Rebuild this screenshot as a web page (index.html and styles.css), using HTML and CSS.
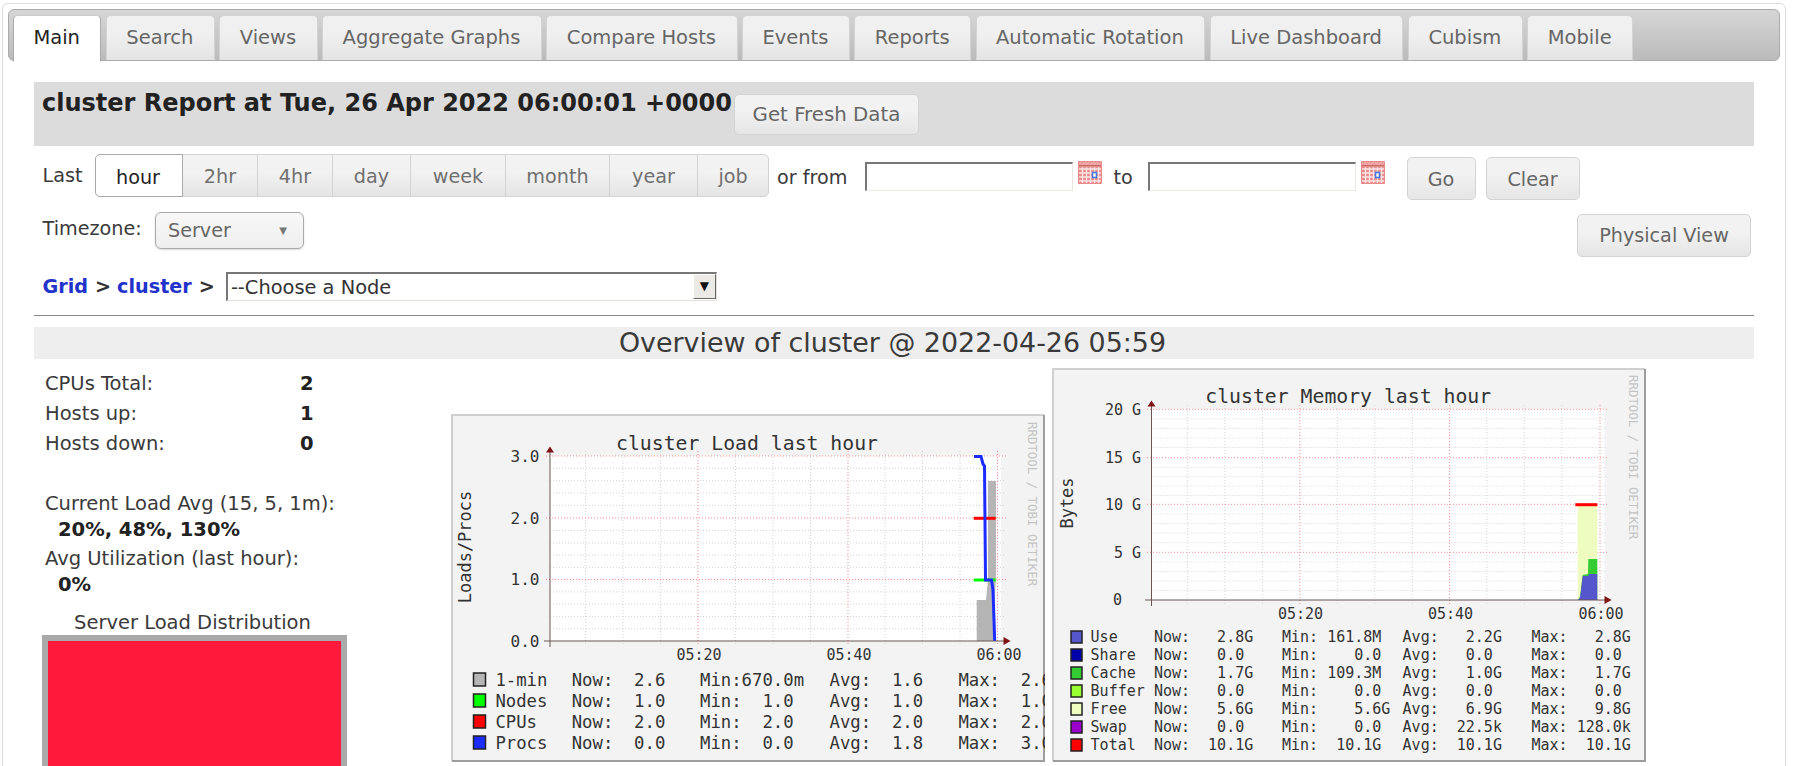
FILE: index.html
```html
<!DOCTYPE html>
<html lang="en">
<head>
<meta charset="utf-8">
<title>cluster Report</title>
<link rel="stylesheet" href="styles.css">
</head>
<body>
<svg class="defs" width="0" height="0" aria-hidden="true">
  <symbol id="cal" viewBox="0 0 24 23">
    <rect x="0" y="0" width="24" height="23" rx="1" fill="#e88a8a"/>
    <rect x="1" y="1" width="22" height="3" fill="#efa3a3"/>
    <path d="M1 4.500H23" stroke="#c86a6a" stroke-width="1" fill="none"/>
    <path d="M1 8h22M1 12h22M1 16h22M1 20h22M4.500 6v16M8.500 6v16M12.500 6v16M16.500 6v16M20.500 6v16" stroke="#fbe6e6" stroke-width="1.300" fill="none"/>
    <rect x="14.500" y="11.500" width="4" height="5" fill="#fff" stroke="#4a78e0" stroke-width="1.600"/>
  </symbol>
</svg>
<div class="panel">
  <nav class="tabbar">
    <a class="tab tab-on">Main</a>
    <a class="tab">Search</a>
    <a class="tab">Views</a>
    <a class="tab">Aggregate Graphs</a>
    <a class="tab">Compare Hosts</a>
    <a class="tab">Events</a>
    <a class="tab">Reports</a>
    <a class="tab">Automatic Rotation</a>
    <a class="tab">Live Dashboard</a>
    <a class="tab">Cubism</a>
    <a class="tab">Mobile</a>
  </nav>
  <div class="content">
    <header class="report">
      <h1 class="report-title">cluster Report at Tue, 26 Apr 2022 06:00:01 +0000</h1>
      <button class="btn btn-fresh">Get Fresh Data</button>
    </header>

    <div class="range-row">
      <span class="last">Last</span>
      <div class="btnset">
        <span class="seg seg-on seg-hour">hour</span>
        <span class="seg seg-2hr">2hr</span>
        <span class="seg seg-4hr">4hr</span>
        <span class="seg seg-day">day</span>
        <span class="seg seg-week">week</span>
        <span class="seg seg-month">month</span>
        <span class="seg seg-year">year</span>
        <span class="seg seg-job">job</span>
      </div>
      <span class="orfrom">or from</span>
      <input class="date" type="text" aria-label="from">
      <svg class="cal" width="24" height="23"><use href="#cal"/></svg>
      <span class="to">to</span>
      <input class="date" type="text" aria-label="to">
      <svg class="cal" width="24" height="23"><use href="#cal"/></svg>
      <button class="btn btn-go">Go</button>
      <button class="btn btn-clear">Clear</button>
    </div>

    <div class="tz-row">
      <span class="tz-label">Timezone:</span>
      <div class="tz-select"><span>Server</span><i class="tz-caret">▼</i></div>
      <button class="btn btn-phys">Physical View</button>
    </div>

    <div class="crumb-row">
      <a class="crumb">Grid</a><b class="sep">&gt;</b><a class="crumb">cluster</a><b class="sep">&gt;</b>
      <div class="node-select"><span>--Choose a Node</span><i class="node-arrow">▼</i></div>
    </div>

    <hr class="rule">
    <h2 class="overview">Overview of cluster @ 2022-04-26 05:59</h2>

    <main class="main">
      <aside class="side">
        <dl class="stats">
          <dt>CPUs Total:</dt><dd>2</dd>
          <dt>Hosts up:</dt><dd>1</dd>
          <dt>Hosts down:</dt><dd>0</dd>
        </dl>
        <p class="metric">Current Load Avg (15, 5, 1m):<b>20%, 48%, 130%</b></p>
        <p class="metric">Avg Utilization (last hour):<b>0%</b></p>
        <p class="pie-title">Server Load Distribution</p>
        <div class="pie"></div>
      </aside>

      <svg class="graph" width="594" height="348" viewBox="0 0 594 348">
        <rect class="bg" width="594" height="348"/>
        <rect class="plot" x="99" y="42" width="451" height="185"/>
        <path class="grid" d="M134.500 37V231M172 37V231M209.600 37V231M284.500 37V231M322 37V231M359.500 37V231M434 37V231M471.500 37V231M509 37V231M99 54.300H555M99 66.600H555M99 79H555M99 91.300H555M99 116.600H555M99 129H555M99 141H555M99 153.300H555M99 177.800H555M99 190H555M99 202.500H555M99 214.800H555"/>
        <path class="grid-major" d="M247 37V231M397 37V231M546.500 37V231M95 42H555M95 104H555M95 165.500H555"/>
        <path fill="#b5b5b5" d="M525.700 227V186H535L537 166V67H545V166L543 190L543.700 227Z"/>
        <path class="s-red" d="M522.700 104.300H544.700"/>
        <path class="s-green" d="M522.700 166H544.700"/>
        <path class="s-blue" d="M523 42.500H530L532 50L533.500 52L534.500 166H540.500L542 176L543.700 227"/>
        <path class="axis" d="M99 38V233M93 227H555"/>
        <path class="arrow" d="M95 38.500L99 32.500L103 38.500ZM552.500 223L559.600 227L552.500 231Z"/>
        <text class="t-title" x="165" y="29">cluster Load last hour</text>
        <text class="t-ylab" transform="translate(14 133) rotate(-90)">Loads/Procs</text>
        <text class="t-wm" transform="translate(581 8) rotate(90)">RRDTOOL / TOBI OETIKER</text>
        <g class="t-tick-lg t-end">
          <text x="88.500" y="42">3.0</text><text x="88.500" y="104">2.0</text><text x="88.500" y="165.500">1.0</text><text x="88.500" y="227">0.0</text>
        </g>
        <g class="t-tick t-mid">
          <text x="248" y="240.500">05:20</text><text x="398" y="240.500">05:40</text><text x="548" y="240.500">06:00</text>
        </g>
        <g class="swatch">
          <rect x="22.500" y="259" width="12" height="13" fill="#b5b5b5"/>
          <rect x="22.500" y="280" width="12" height="13" fill="#00ff00"/>
          <rect x="22.500" y="301" width="12" height="13" fill="#ff0000"/>
          <rect x="22.500" y="322" width="12" height="13" fill="#1c2cff"/>
        </g>
        <path class="edge-light" d="M1 347V1H593"/>
        <path class="edge-dark" d="M593 1V347H1"/>
        <g class="t-leg-a">
          <text y="265.500"><tspan x="44.400">1-min</tspan><tspan x="120.700">Now:  2.6</tspan><tspan x="249">Min:670.0m</tspan><tspan x="378.500">Avg:  1.6</tspan><tspan x="507.400">Max:  2.6</tspan></text>
          <text y="286.500"><tspan x="44.400">Nodes</tspan><tspan x="120.700">Now:  1.0</tspan><tspan x="249">Min:  1.0</tspan><tspan x="378.500">Avg:  1.0</tspan><tspan x="507.400">Max:  1.0</tspan></text>
          <text y="307.500"><tspan x="44.400">CPUs</tspan><tspan x="120.700">Now:  2.0</tspan><tspan x="249">Min:  2.0</tspan><tspan x="378.500">Avg:  2.0</tspan><tspan x="507.400">Max:  2.0</tspan></text>
          <text y="328.500"><tspan x="44.400">Procs</tspan><tspan x="120.700">Now:  0.0</tspan><tspan x="249">Min:  0.0</tspan><tspan x="378.500">Avg:  1.8</tspan><tspan x="507.400">Max:  3.0</tspan></text>
        </g>
      </svg>

      <svg class="graph" width="594" height="394" viewBox="0 0 594 394">
        <rect class="bg" width="594" height="394"/>
        <rect class="plot" x="99.500" y="41.300" width="453" height="190.700"/>
        <path class="grid" d="M135.300 37V236M172.800 37V236M210.400 37V236M285.300 37V236M322.800 37V236M360.300 37V236M434.800 37V236M472.300 37V236M509.800 37V236M99.500 50.900H555M99.500 60.400H555M99.500 70H555M99.500 79.500H555M99.500 99.300H555M99.500 108.700H555M99.500 118H555M99.500 127.500H555M99.500 146H555M99.500 155.600H555M99.500 165H555M99.500 174.700H555M99.500 194H555M99.500 203.500H555M99.500 213H555M99.500 222.500H555"/>
        <path class="grid-major" d="M247.800 37V236M397.600 37V236M548 37V236M95 41.300H555M95 89.700H555M95 136.300H555M95 184.300H555"/>
        <rect x="525.700" y="136.700" width="19.600" height="95.300" fill="#eefcc0"/>
        <path fill="#33cc33" d="M525.700 232L528 229L530.700 207L536 206L536.300 191H545.300V232Z"/>
        <path fill="#5555cc" d="M525.700 232L528 230L530.700 208H536.300L537 206H545.300V232Z"/>
        <path class="s-red" d="M523.300 136.700H545.300"/>
        <path class="axis" d="M99.500 38V238M93 232H555"/>
        <path class="arrow" d="M95.500 38.500L99.500 32.500L103.500 38.500ZM552.500 228L559.600 232L552.500 236Z"/>
        <text class="t-title" x="153.300" y="28">cluster Memory last hour</text>
        <text class="t-ylab" transform="translate(15 135) rotate(-90)">Bytes</text>
        <text class="t-wm" transform="translate(581 7) rotate(90)">RRDTOOL / TOBI OETIKER</text>
        <g class="t-tick t-end">
          <text x="89" y="42">20 G</text><text x="89" y="90">15 G</text><text x="89" y="137">10 G</text><text x="89" y="184.500">5 G</text><text x="70" y="232">0</text>
        </g>
        <g class="t-tick t-mid">
          <text x="248.500" y="246">05:20</text><text x="398.500" y="246">05:40</text><text x="549" y="246">06:00</text>
        </g>
        <g class="swatch">
          <rect x="19" y="263" width="11" height="12" fill="#5555cc"/>
          <rect x="19" y="281" width="11" height="12" fill="#0000aa"/>
          <rect x="19" y="299" width="11" height="12" fill="#33cc33"/>
          <rect x="19" y="317" width="11" height="12" fill="#99ff33"/>
          <rect x="19" y="335" width="11" height="12" fill="#f0ffc0"/>
          <rect x="19" y="353" width="11" height="12" fill="#9900cc"/>
          <rect x="19" y="371" width="11" height="12" fill="#ff0000"/>
        </g>
        <g class="t-leg-b">
          <text y="268.700"><tspan x="38.600">Use</tspan><tspan x="101.900">Now:   2.8G</tspan><tspan x="230">Min: 161.8M</tspan><tspan x="350.600">Avg:   2.2G</tspan><tspan x="479.500">Max:   2.8G</tspan></text>
          <text y="286.700"><tspan x="38.600">Share</tspan><tspan x="101.900">Now:   0.0</tspan><tspan x="230">Min:    0.0</tspan><tspan x="350.600">Avg:   0.0</tspan><tspan x="479.500">Max:   0.0</tspan></text>
          <text y="304.700"><tspan x="38.600">Cache</tspan><tspan x="101.900">Now:   1.7G</tspan><tspan x="230">Min: 109.3M</tspan><tspan x="350.600">Avg:   1.0G</tspan><tspan x="479.500">Max:   1.7G</tspan></text>
          <text y="322.700"><tspan x="38.600">Buffer</tspan><tspan x="101.900">Now:   0.0</tspan><tspan x="230">Min:    0.0</tspan><tspan x="350.600">Avg:   0.0</tspan><tspan x="479.500">Max:   0.0</tspan></text>
          <text y="340.700"><tspan x="38.600">Free</tspan><tspan x="101.900">Now:   5.6G</tspan><tspan x="230">Min:    5.6G</tspan><tspan x="350.600">Avg:   6.9G</tspan><tspan x="479.500">Max:   9.8G</tspan></text>
          <text y="358.700"><tspan x="38.600">Swap</tspan><tspan x="101.900">Now:   0.0</tspan><tspan x="230">Min:    0.0</tspan><tspan x="350.600">Avg:  22.5k</tspan><tspan x="479.500">Max: 128.0k</tspan></text>
          <text y="376.700"><tspan x="38.600">Total</tspan><tspan x="101.900">Now:  10.1G</tspan><tspan x="230">Min:  10.1G</tspan><tspan x="350.600">Avg:  10.1G</tspan><tspan x="479.500">Max:  10.1G</tspan></text>
        </g>
        <path class="edge-light" d="M1 393V1H593"/>
        <path class="edge-dark" d="M593 1V393H1"/>
      </svg>
    </main>
  </div>
</div>
</body>
</html>
```
FILE: styles.css
```css
* { box-sizing: border-box; }
html, body { margin: 0; height: 766px; overflow: hidden; background: #fff; }
body { font: 19.2px "DejaVu Sans", sans-serif; color: #3a3a3a; padding: 3px 10px 0 2px; }
.defs { display: block; height: 0; }

.panel { border: 1px solid #ddd; border-radius: 6px; height: 900px; }

.tabbar {
  display: flex; gap: 4.500px; height: 52px; margin: 5px 5px 0;
  padding: 5px 0 0 4px;
  border: 1px solid #aaa; border-radius: 6px;
  background: linear-gradient(#d6d6d6, #bbb);
}
.tab {
  display: block; height: 46px; padding: 0 20.500px 0 19.400px; line-height: 43px; font-size: 19.500px;
  color: #666; white-space: nowrap;
  border: 1px solid #d3d3d3; border-bottom-color: #aaa; border-radius: 5px 5px 0 0;
  background: linear-gradient(#f0f0f0 40%, #e4e4e4);
}
.tab-on { background: #fff; color: #222; border-color: #ccc #aaa #fff; height: 47px; }

.content { padding: 0 31px; }

.report { display: flex; height: 64px; margin-top: 21px; background: #dcdcdc; padding-left: 8px; }
.report-title { margin: 5px 0 0; font-size: 24px; line-height: 32px; font-weight: bold; color: #222; white-space: nowrap; }

.btn {
  font: inherit; color: #666; height: 43px; padding: 0;
  border: 1px solid #d3d3d3; border-radius: 5px;
  background: linear-gradient(#f2f2f2 40%, #e5e5e5);
}
.btn-fresh { width: 185px; height: 41px; margin: 12px 0 0 2px; font-size: 19.800px; }

.range-row { display: flex; align-items: flex-start; height: 58px; padding: 8px 0 0 8.500px; }
.last { width: 52.500px; line-height: 43px; }
.btnset {
  display: flex; width: 674px; height: 43px; margin-right: 8px;
  border: 1px solid #d3d3d3; border-radius: 5px;
  background: linear-gradient(#f2f2f2 40%, #e5e5e5);
}
.seg { padding-top: 2px; line-height: 40px; text-align: center; color: #707070; border-right: 1px solid #d3d3d3; }
.seg-on { color: #222; background: #fff; border: 1px solid #aaa; border-radius: 5px 0 0 5px; margin: -1px 0 -1px -1px; line-height: 41px; }
.seg-hour { width: 88px; padding-right: 2px; } .seg-2hr { width: 75px; } .seg-4hr { width: 75px; } .seg-day { width: 78px; }
.seg-week { width: 95px; } .seg-month { width: 104px; } .seg-year { width: 88px; } .seg-job { flex: 1; border-right: 0; }
.orfrom { width: 87.500px; line-height: 47px; }
.date {
  width: 208px; height: 29px; margin-top: 8px; padding: 0;
  background: #fff; border: 1px solid #ebe7e2; border-top: 2px solid #777; border-left: 2px solid #777;
}
.cal { margin: 7px 0 0 5px; flex: none; }
.to { width: 46px; padding-left: 12px; line-height: 47px; }
.btn-go { width: 69px; margin: 3px 0 0 22px; padding-top: 2px; }
.btn-clear { width: 94px; margin: 3px 0 0 10px; padding-top: 2px; }

.tz-row { display: flex; align-items: flex-start; height: 68px; padding: 8px 3px 0 8.500px; }
.tz-label { width: 112.500px; line-height: 34px; }
.tz-select {
  display: flex; justify-content: space-between; align-items: center;
  width: 149px; height: 37px; padding: 0 16px 0 12px; color: #666;
  border: 1px solid #aaa; border-radius: 6px;
  background: linear-gradient(#f8f8f8, #efefef);
  box-shadow: 0 1px 2px rgba(0, 0, 0, 0.15);
}
.tz-caret { font-style: normal; font-size: 10px; color: #777; }
.btn-phys { width: 174px; margin: 2px 0 0 auto; }

.crumb-row { display: flex; align-items: center; height: 29px; padding-left: 8.500px; font-weight: bold; white-space: nowrap; }
.crumb { color: #2233cc; }
.sep { color: #333; margin: 0 6px 0 7px; }
.node-select {
  display: flex; justify-content: space-between; width: 491px; height: 29px; margin-left: 5px;
  padding-left: 3px; line-height: 27px; font-weight: normal; font-size: 19.400px; color: #333; background: #fff;
  border: 1px solid #e4e1dd; border-top: 2px solid #777; border-left: 2px solid #777;
}
.node-arrow {
  width: 23px; height: 25px; font-style: normal; font-size: 12px; line-height: 23px; text-align: center; color: #111;
  background: #eceae6; border: 1px solid; border-color: #fff #666 #666 #fff;
}

.rule { height: 1px; margin: 14px 0 0; border: 0; background: #888; }
.overview { height: 32px; margin: 11px 0 0; font-size: 26.880px; line-height: 32px; font-weight: normal; text-align: center; color: #3a3a3a; background: #eee; text-indent: -3px; }

.main { display: flex; align-items: flex-end; gap: 7px; height: 403px; }
.side { align-self: flex-start; flex: none; width: 410px; padding: 10px 0 0 11px; font-size: 19.500px; }
.stats { display: grid; grid-template-columns: 255px 1fr; grid-auto-rows: 30px; margin: 0; line-height: 30px; }
.stats dt { margin: 0; }
.stats dd { margin: 0; font-weight: bold; color: #222; }
.metric { margin: 0; line-height: 26px; }
.stats + .metric { margin-top: 32px; }
.metric + .metric { margin-top: 3px; }
.metric b { display: block; padding-left: 13px; color: #222; }
.pie-title { margin: 12px 0 0 29px; line-height: 25px; }
.pie { width: 305px; height: 305px; margin: 0 0 0 -3px; border: 6px solid #aaa; background: #ff1a3c; }

.graph { display: block; flex: none; font-family: "DejaVu Sans Mono", monospace; overflow: hidden; }
.bg { fill: #f3f3f3; }
.plot { fill: #fff; }
.grid { fill: none; stroke: #d4d4d4; stroke-width: 1; stroke-dasharray: 1 2; }
.grid-major { fill: none; stroke: #f59090; stroke-width: 1; stroke-dasharray: 1 2; }
.axis { fill: none; stroke: #6b5555; stroke-width: 1; }
.arrow { fill: #7f1414; }
.s-red, .s-green, .s-blue { fill: none; stroke-width: 3; }
.s-red { stroke: #ff0000; }
.s-green { stroke: #00ff00; }
.s-blue { stroke: #1c2cff; }
.edge-light { fill: none; stroke: #cfcfcf; stroke-width: 2; }
.edge-dark { fill: none; stroke: #9e9e9e; stroke-width: 2; }
.swatch rect { stroke: #222; stroke-width: 1.500; }
.graph text { fill: #333; dominant-baseline: central; white-space: pre; }
.t-title { font-size: 19.800px; }
.t-ylab { font-size: 17px; text-anchor: middle; }
.graph .t-wm { font-size: 12.400px; fill: #c4c4c4; }
.t-tick { font-size: 15px; }
.t-tick-lg { font-size: 16px; }
.t-end { text-anchor: end; }
.t-mid { text-anchor: middle; }
.t-leg-a { font-size: 17.300px; }
.t-leg-b { font-size: 15px; }
```
